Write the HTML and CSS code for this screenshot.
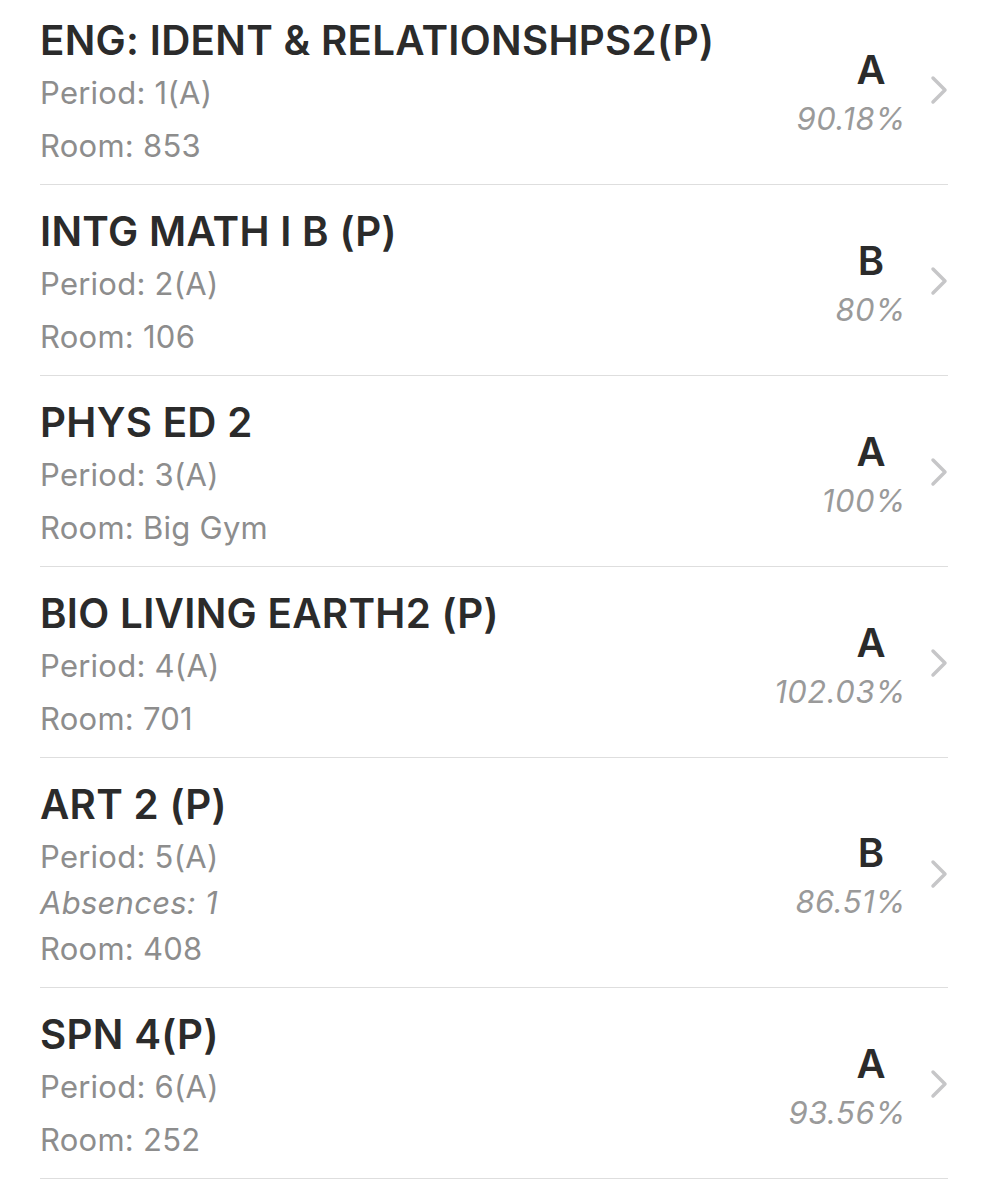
FILE: index.html
```html
<!DOCTYPE html>
<html lang="en">

<head>
  <meta charset="UTF-8" />
  <meta name="viewport" content="width=device-width, initial-scale=1.0" />
  <title>Classes</title>
  <link rel="stylesheet" href="styles.css">
</head>

<body>
  <ul class="clases">
    <li class="clase">
      <div class="info">
        <div class="nombre">ENG: IDENT &amp; RELATIONSHPS2(P)</div>
        <div class="detalle periodo">Period: 1(A)</div>
        <div class="detalle sala">Room: 853</div>
      </div>
      <div class="nota">
        <div class="letra">A</div>
        <div class="porcentaje">90.18%</div>
      </div>
      <svg class="flecha" width="18" height="30" viewBox="0 0 18 30"><polyline points="3,3 15,15 3,27" /></svg>
    </li>

    <li class="clase">
      <div class="info">
        <div class="nombre">INTG MATH I B (P)</div>
        <div class="detalle periodo">Period: 2(A)</div>
        <div class="detalle sala">Room: 106</div>
      </div>
      <div class="nota">
        <div class="letra">B</div>
        <div class="porcentaje">80%</div>
      </div>
      <svg class="flecha" width="18" height="30" viewBox="0 0 18 30"><polyline points="3,3 15,15 3,27" /></svg>
    </li>

    <li class="clase">
      <div class="info">
        <div class="nombre">PHYS ED 2</div>
        <div class="detalle periodo">Period: 3(A)</div>
        <div class="detalle sala">Room: Big Gym</div>
      </div>
      <div class="nota">
        <div class="letra">A</div>
        <div class="porcentaje">100%</div>
      </div>
      <svg class="flecha" width="18" height="30" viewBox="0 0 18 30"><polyline points="3,3 15,15 3,27" /></svg>
    </li>

    <li class="clase">
      <div class="info">
        <div class="nombre">BIO LIVING EARTH2 (P)</div>
        <div class="detalle periodo">Period: 4(A)</div>
        <div class="detalle sala">Room: 701</div>
      </div>
      <div class="nota">
        <div class="letra">A</div>
        <div class="porcentaje">102.03%</div>
      </div>
      <svg class="flecha" width="18" height="30" viewBox="0 0 18 30"><polyline points="3,3 15,15 3,27" /></svg>
    </li>

    <li class="clase">
      <div class="info">
        <div class="nombre">ART 2 (P)</div>
        <div class="detalle periodo">Period: 5(A)</div>
        <div class="detalle ausencias">Absences: 1</div>
        <div class="detalle sala">Room: 408</div>
      </div>
      <div class="nota">
        <div class="letra">B</div>
        <div class="porcentaje">86.51%</div>
      </div>
      <svg class="flecha" width="18" height="30" viewBox="0 0 18 30"><polyline points="3,3 15,15 3,27" /></svg>
    </li>

    <li class="clase">
      <div class="info">
        <div class="nombre">SPN 4(P)</div>
        <div class="detalle periodo">Period: 6(A)</div>
        <div class="detalle sala">Room: 252</div>
      </div>
      <div class="nota">
        <div class="letra">A</div>
        <div class="porcentaje">93.56%</div>
      </div>
      <svg class="flecha" width="18" height="30" viewBox="0 0 18 30"><polyline points="3,3 15,15 3,27" /></svg>
    </li>
  </ul>
</body>

</html>
```

FILE: styles.css
```css
body {
  margin: 0;
  font-family: Inter, "Noto Sans", sans-serif;
  background-color: white;
}

.clases {
  list-style: none;
  margin: 0 40px;
  padding: 0;
}

.clase {
  display: flex;
  align-items: center;
  padding: 23px 0 15px;
  border-bottom: 1px solid #dedede;
}

.clase:first-child {
  padding-top: 17px;
}

.info {
  flex: 1;
}

.nombre {
  font-size: 40.3px;
  line-height: 48px;
  font-weight: 600;
  letter-spacing: 0.3px;
  color: #2b2b2b;
  margin-bottom: 5px;
}

.detalle {
  font-size: 31px;
  line-height: 46px;
  letter-spacing: 0.25px;
  color: #8d8d8d;
}

/* sin ausencias hay mas espacio antes de la sala */
.periodo + .sala {
  margin-top: 7px;
}

.ausencias {
  font-style: italic;
}

.nota {
  display: flex;
  flex-direction: column;
  align-items: flex-end;
}

.letra {
  width: 64px;
  text-align: center;
  font-size: 40px;
  line-height: 40px;
  font-weight: 600;
  color: #2b2b2b;
  margin-bottom: 11px;
}

.porcentaje {
  font-size: 31px;
  line-height: 36px;
  font-style: italic;
  letter-spacing: 0.5px;
  color: #9a9a9a;
  margin-right: -3px;
}

.flecha {
  margin-left: 27px;
  margin-bottom: 6px;
  fill: none;
  stroke: #c6c6c8;
  stroke-width: 3.5;
  stroke-linecap: round;
  stroke-linejoin: round;
}
```
